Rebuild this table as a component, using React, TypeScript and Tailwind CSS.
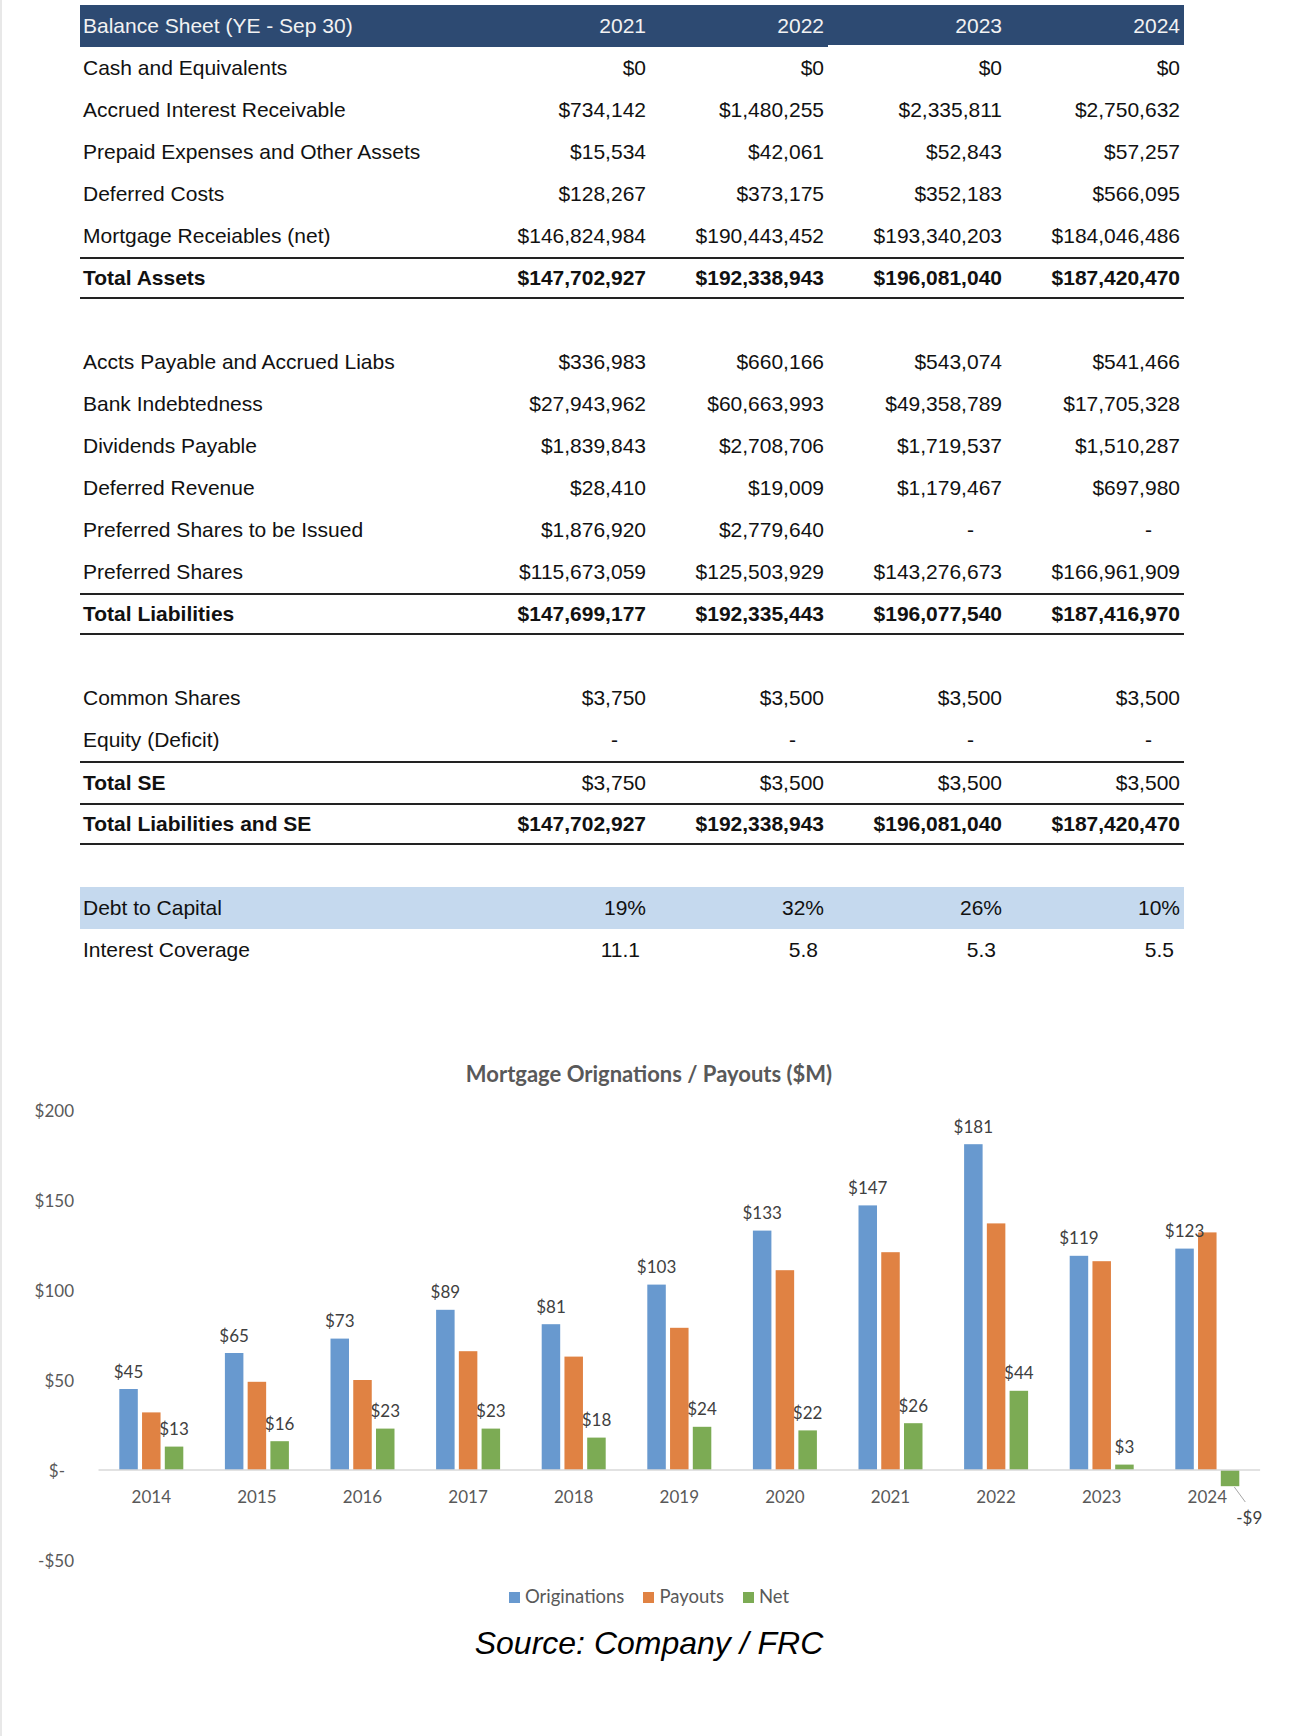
type Row =
  | { kind: 'blank' }
  | {
      kind: 'row';
      label: string;
      vals: string[];
      bold?: boolean;
      boldLabel?: boolean;
      top?: boolean;
      bottom?: boolean;
      shade?: boolean;
      ratio?: boolean;
    };

const rows: Row[] = [
  { kind: 'row', label: 'Cash and Equivalents', vals: ['$0', '$0', '$0', '$0'] },
  { kind: 'row', label: 'Accrued Interest Receivable', vals: ['$734,142', '$1,480,255', '$2,335,811', '$2,750,632'] },
  { kind: 'row', label: 'Prepaid Expenses and Other Assets', vals: ['$15,534', '$42,061', '$52,843', '$57,257'] },
  { kind: 'row', label: 'Deferred Costs', vals: ['$128,267', '$373,175', '$352,183', '$566,095'] },
  { kind: 'row', label: 'Mortgage Receiables (net)', vals: ['$146,824,984', '$190,443,452', '$193,340,203', '$184,046,486'] },
  { kind: 'row', label: 'Total Assets', vals: ['$147,702,927', '$192,338,943', '$196,081,040', '$187,420,470'], bold: true, top: true, bottom: true },
  { kind: 'blank' },
  { kind: 'row', label: 'Accts Payable and Accrued Liabs', vals: ['$336,983', '$660,166', '$543,074', '$541,466'] },
  { kind: 'row', label: 'Bank Indebtedness', vals: ['$27,943,962', '$60,663,993', '$49,358,789', '$17,705,328'] },
  { kind: 'row', label: 'Dividends Payable', vals: ['$1,839,843', '$2,708,706', '$1,719,537', '$1,510,287'] },
  { kind: 'row', label: 'Deferred Revenue', vals: ['$28,410', '$19,009', '$1,179,467', '$697,980'] },
  { kind: 'row', label: 'Preferred Shares to be Issued', vals: ['$1,876,920', '$2,779,640', '-', '-'] },
  { kind: 'row', label: 'Preferred Shares', vals: ['$115,673,059', '$125,503,929', '$143,276,673', '$166,961,909'] },
  { kind: 'row', label: 'Total Liabilities', vals: ['$147,699,177', '$192,335,443', '$196,077,540', '$187,416,970'], bold: true, top: true, bottom: true },
  { kind: 'blank' },
  { kind: 'row', label: 'Common Shares', vals: ['$3,750', '$3,500', '$3,500', '$3,500'] },
  { kind: 'row', label: 'Equity (Deficit)', vals: ['-', '-', '-', '-'] },
  { kind: 'row', label: 'Total SE', vals: ['$3,750', '$3,500', '$3,500', '$3,500'], boldLabel: true, top: true },
  { kind: 'row', label: 'Total Liabilities and SE', vals: ['$147,702,927', '$192,338,943', '$196,081,040', '$187,420,470'], bold: true, top: true, bottom: true },
  { kind: 'blank' },
  { kind: 'row', label: 'Debt to Capital', vals: ['19%', '32%', '26%', '10%'], shade: true },
  { kind: 'row', label: 'Interest Coverage', vals: ['11.1', '5.8', '5.3', '5.5'], ratio: true },
];

const years = [2014, 2015, 2016, 2017, 2018, 2019, 2020, 2021, 2022, 2023, 2024];
const orig = [45, 65, 73, 89, 81, 103, 133, 147, 181, 119, 123];
const net = [13, 16, 23, 23, 18, 24, 22, 26, 44, 3, -9];

function clsx(...parts: (string | false | undefined)[]) {
  return parts.filter(Boolean).join(' ');
}

function BalanceSheet() {
  return (
    <div className="w-[1104px] font-['Liberation_Sans',Arial,sans-serif] text-[21px] text-[#111]">
      <div className="grid grid-cols-[392px_178px_178px_178px_178px] items-start text-[#f2f2f2]">
        <div className="flex h-[42px] items-center bg-[#2d4a72] pl-[3px]">Balance Sheet (YE - Sep 30)</div>
        <div className="flex h-[42px] items-center justify-end bg-[#2d4a72] pr-[4px]">2021</div>
        <div className="flex h-[42px] items-center justify-end bg-[#2d4a72] pr-[4px]">2022</div>
        <div className="flex h-[40px] items-center justify-end bg-[#2d4a72] pr-[4px] pt-[2px]">2023</div>
        <div className="flex h-[40px] items-center justify-end bg-[#2d4a72] pr-[4px] pt-[2px]">2024</div>
      </div>
      {rows.map((r, i) => {
        if (r.kind === 'blank') return <div key={i} className="h-[42px]" />;
        return (
          <div
            key={i}
            className={clsx(
              'grid h-[42px] grid-cols-[392px_178px_178px_178px_178px] items-center border-[#222]',
              r.top && 'border-t-2',
              r.bottom && 'border-b-2',
              r.shade && 'bg-[#c5d9ee]',
              r.bold && 'font-bold',
            )}
          >
            <div className={clsx('pl-[3px]', r.boldLabel && 'font-bold')}>{r.label}</div>
            {r.vals.map((v, j) => (
              <div
                key={j}
                className={clsx('text-right', v === '-' ? 'pr-[32px]' : r.ratio ? 'pr-[10px]' : 'pr-[4px]')}
              >
                {v}
              </div>
            ))}
          </div>
        );
      })}
    </div>
  );
}

function Chart() {
  const x0 = 96.5;
  const step = 105.6;
  const zero = 1470;
  const k = 1.8;
  const bw = 18.5;
  const ticks = [
    { y: 1110, t: '$200', x: 72 },
    { y: 1200, t: '$150', x: 72 },
    { y: 1290, t: '$100', x: 72 },
    { y: 1380, t: '$50', x: 72 },
    { y: 1470, t: '$-', x: 63 },
    { y: 1560, t: '-$50', x: 72 },
  ];
  return (
    <svg width={1296} height={492} viewBox="0 1088 1296 492" className="block font-['Lato',sans-serif]">
      {ticks.map((t) => (
        <text key={t.t} x={t.x} y={t.y} textAnchor="end" dominantBaseline="central" fontSize={17} fill="#595959">
          {t.t}
        </text>
      ))}
      {years.map((yr, i) => {
        const c = x0 + step * (i + 0.5);
        const o = orig[i];
        const n = net[i];
        const p = o - n;
        const gTop = n >= 0 ? zero - n * k : zero;
        return (
          <g key={yr}>
            <rect x={c - 32} y={zero - o * k} width={bw} height={o * k} fill="#6899cf" />
            <rect x={c - 9.25} y={zero - p * k} width={bw} height={p * k} fill="#e08243" />
            <rect x={c + 13.5} y={gTop} width={bw} height={Math.abs(n) * k} fill="#7cab54" />
          </g>
        );
      })}
      <line x1={x0} y1={zero} x2={x0 + step * 11} y2={zero} stroke="#d9d9d9" strokeWidth={1.5} />
      {years.map((yr, i) => {
        const c = x0 + step * (i + 0.5);
        const o = orig[i];
        const n = net[i];
        return (
          <g key={'l' + yr} fontSize={17}>
            <text x={c} y={1496} textAnchor="middle" dominantBaseline="central" fill="#595959">
              {yr}
            </text>
            <text x={c - 22.75} y={zero - o * k - 18} textAnchor="middle" dominantBaseline="central" fill="#404040">
              ${o}
            </text>
            {n >= 0 ? (
              <text x={c + 22.75} y={zero - n * k - 18} textAnchor="middle" dominantBaseline="central" fill="#404040">
                ${n}
              </text>
            ) : (
              <>
                <line x1={c + 27} y1={zero + 17} x2={c + 38} y2={zero + 32} stroke="#a6a6a6" strokeWidth={1} />
                <text x={c + 42} y={1517} textAnchor="middle" dominantBaseline="central" fill="#404040">
                  -${Math.abs(n)}
                </text>
              </>
            )}
          </g>
        );
      })}
    </svg>
  );
}

export default function App() {
  return (
    <div className="min-h-[1736px] w-[1296px] border-l-2 border-[#e8e8e8] bg-white">
      <div className="pl-[78px] pt-[5px]">
        <BalanceSheet />
      </div>
      <div className="mt-[89px] h-[28px] text-center font-['Lato',sans-serif] text-[22px] leading-[28px] font-bold text-[#595959]">
        Mortgage Orignations / Payouts ($M)
      </div>
      <Chart />
      <div className="mt-[5px] flex h-[24px] items-center justify-center gap-[19px] font-['Lato',sans-serif] text-[18.5px] text-[#595959]">
        <div className="flex items-center gap-[5px]">
          <span className="h-[11px] w-[11px] bg-[#6899cf]" />
          Originations
        </div>
        <div className="flex items-center gap-[5px]">
          <span className="h-[11px] w-[11px] bg-[#e08243]" />
          Payouts
        </div>
        <div className="flex items-center gap-[5px]">
          <span className="h-[11px] w-[11px] bg-[#7cab54]" />
          Net
        </div>
      </div>
      <div className="mt-[14px] h-[40px] text-center font-['Liberation_Sans',Arial,sans-serif] text-[32px] leading-[40px] italic text-black">
        Source: Company / FRC
      </div>
    </div>
  );
}
